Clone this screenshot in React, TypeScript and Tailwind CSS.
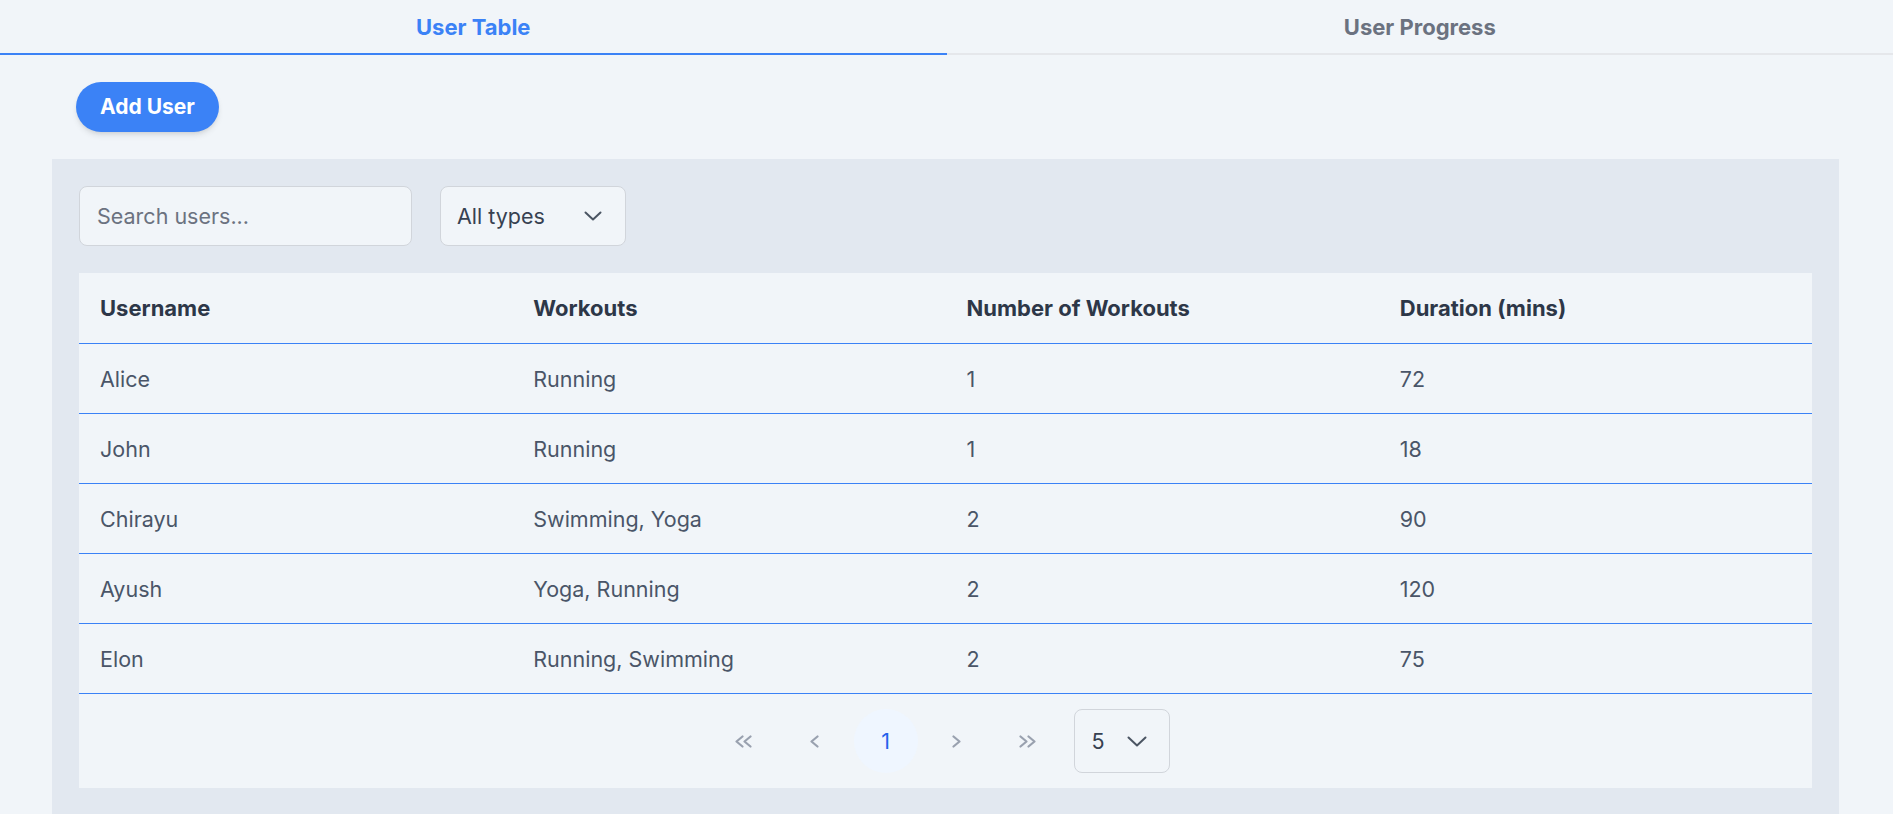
import React from "react";

const rows = [
  { name: "Alice", workouts: "Running", count: 1, duration: 72 },
  { name: "John", workouts: "Running", count: 1, duration: 18 },
  { name: "Chirayu", workouts: "Swimming, Yoga", count: 2, duration: 90 },
  { name: "Ayush", workouts: "Yoga, Running", count: 2, duration: 120 },
  { name: "Elon", workouts: "Running, Swimming", count: 2, duration: 75 },
];

function ChevronDown({ w, h, className }: { w: number; h: number; className?: string }) {
  return (
    <svg width={w} height={h} viewBox={`0 0 ${w} ${h}`} className={className} fill="none">
      <polyline
        points={`1.5,1.5 ${w / 2},${h - 1.5} ${w - 1.5},1.5`}
        stroke="currentColor"
        strokeWidth="2"
        strokeLinecap="round"
        strokeLinejoin="round"
      />
    </svg>
  );
}

function Single({ dir }: { dir: "left" | "right" }) {
  const pts = dir === "left" ? "7.5,1.5 1.5,6.5 7.5,11.5" : "1.5,1.5 7.5,6.5 1.5,11.5";
  return (
    <svg width="9" height="13" viewBox="0 0 9 13" fill="none" className="text-gray-400">
      <polyline points={pts} stroke="currentColor" strokeWidth="2.2" strokeLinecap="round" strokeLinejoin="round" />
    </svg>
  );
}

function Double({ dir }: { dir: "left" | "right" }) {
  const a = dir === "left" ? "7.5,1.5 1.5,6.5 7.5,11.5" : "1.5,1.5 7.5,6.5 1.5,11.5";
  const b = dir === "left" ? "15.5,1.5 9.5,6.5 15.5,11.5" : "9.5,1.5 15.5,6.5 9.5,11.5";
  return (
    <svg width="17" height="13" viewBox="0 0 17 13" fill="none" className="text-gray-400">
      <polyline points={a} stroke="currentColor" strokeWidth="2.2" strokeLinecap="round" strokeLinejoin="round" />
      <polyline points={b} stroke="currentColor" strokeWidth="2.2" strokeLinecap="round" strokeLinejoin="round" />
    </svg>
  );
}

export default function App() {
  return (
    <div
      className="min-h-[814px] bg-[#f1f5f9]"
      style={{ fontFamily: "Inter, 'Noto Sans', Roboto, sans-serif" }}
    >
      {/* Tabs */}
      <div className="flex">
        <button className="flex-1 h-[55px] border-b-2 border-[#3b82f6] text-[#3b82f6] text-[22px] leading-[30px] font-bold">
          User Table
        </button>
        <button className="flex-1 h-[55px] border-b-2 border-[#e5e7eb] text-[#6b7280] text-[22px] leading-[30px] font-bold">
          User Progress
        </button>
      </div>

      {/* Add user */}
      <div className="pl-[76px] pt-[27px] pb-[27px]">
        <button className="h-[50px] px-[24px] rounded-full bg-[#3b82f6] text-white text-[21px] leading-[28px] font-bold shadow-md">
          Add User
        </button>
      </div>

      {/* Panel */}
      <div className="pl-[52px] pr-[54px]">
        <div className="bg-[#e2e8f0] p-[27px]">
          <div className="flex gap-[28px] mb-[27px]">
            <div className="w-[333px] h-[60px] rounded-lg border border-[#d1d5db] bg-[#f1f5f9] flex items-center pl-[17px] text-[21.5px] leading-[28px] text-[#6b7280]">
              Search users...
            </div>
            <div className="w-[186px] h-[60px] rounded-lg border border-[#d1d5db] bg-[#f1f5f9] flex items-center justify-between pl-[16px] pr-[23px] text-[21.5px] leading-[28px] text-[#374151]">
              <span>All types</span>
              <ChevronDown w={18} h={10} className="text-[#4b5563]" />
            </div>
          </div>

          <div className="bg-[#f1f5f9]">
            <div className="grid grid-cols-4 h-[71px] border-b border-[#3b82f6] items-center">
              {["Username", "Workouts", "Number of Workouts", "Duration (mins)"].map((h) => (
                <div key={h} className="px-[21px] text-[22px] leading-[30px] font-bold text-[#2d3748]">
                  {h}
                </div>
              ))}
            </div>
            {rows.map((r) => (
              <div
                key={r.name}
                className="grid grid-cols-4 h-[70px] border-b border-[#3b82f6] items-center text-[21.5px] leading-[28px] text-[#4a5568]"
              >
                <div className="px-[21px]">{r.name}</div>
                <div className="px-[21px]">{r.workouts}</div>
                <div className="px-[21px]">{r.count}</div>
                <div className="px-[21px]">{r.duration}</div>
              </div>
            ))}

            <div className="flex items-center justify-center gap-[7px] py-[15px] pr-[10px]">
              <button className="w-16 h-16 rounded-full flex items-center justify-center">
                <Double dir="left" />
              </button>
              <button className="w-16 h-16 rounded-full flex items-center justify-center">
                <Single dir="left" />
              </button>
              <button className="w-16 h-16 rounded-full flex items-center justify-center bg-[#eff6ff] text-[#2563eb] text-[21.5px] leading-[28px]">
                1
              </button>
              <button className="w-16 h-16 rounded-full flex items-center justify-center">
                <Single dir="right" />
              </button>
              <button className="w-16 h-16 rounded-full flex items-center justify-center">
                <Double dir="right" />
              </button>
              <div className="ml-[7px] w-[96px] h-16 rounded-lg border border-[#d1d5db] flex items-center justify-between pl-[17px] pr-[22px] text-[21.5px] leading-[28px] text-[#374151]">
                <span>5</span>
                <ChevronDown w={20} h={11} className="text-[#4b5563]" />
              </div>
            </div>
          </div>
        </div>
      </div>
    </div>
  );
}
